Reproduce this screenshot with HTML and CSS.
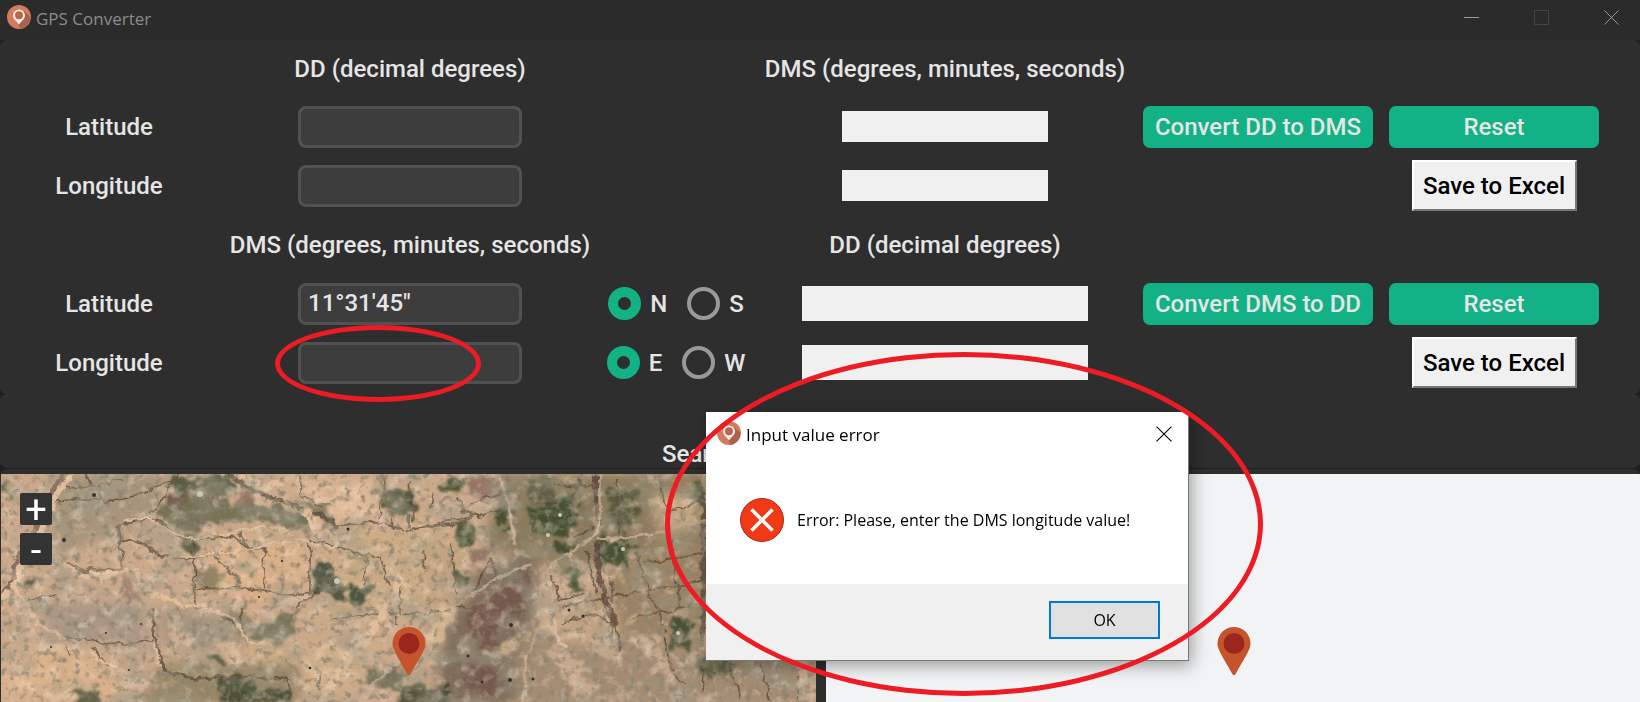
FILE: index.html
```html
<!DOCTYPE html>
<html lang="en">
<head>
<meta charset="utf-8">
<meta name="viewport" content="width=device-width, initial-scale=1">
<title>GPS Converter</title>
<link rel="stylesheet" href="styles.css">
</head>
<body class="app">
<svg class="defs" width="0" height="0" aria-hidden="true">
  <defs>
    <symbol id="logo" viewBox="0 0 24 24">
      <circle cx="12" cy="12" r="12" fill="#d27b5d"/>
      <path d="M17 6 L23.400 12 A12 12 0 0 1 13 24 L11.500 19 Z" fill="#a9624b"/>
      <path fill-rule="evenodd" d="M12 4.500a6 6 0 0 0-6 6c0 3.400 3.500 5.500 6 9 2.500-3.500 6-5.600 6-9a6 6 0 0 0-6-6z" fill="#f6ebe7"/>
      <circle cx="12" cy="10.300" r="4" fill="#b5684f"/>
    </symbol>
    <symbol id="pin" viewBox="0 0 34 48">
      <path d="M17 0A16.500 16.500 0 0 0 .5 16.500C.5 22 4 27 16 48h2C30 27 33.500 22 33.500 16.500A16.500 16.500 0 0 0 17 0z" fill="#c5542d"/>
      <circle cx="17" cy="16.500" r="10.500" fill="#9b261e"/>
    </symbol>
    <symbol id="cross" viewBox="0 0 15 15">
      <path d="M.5.5l14 14M14.500.5l-14 14" fill="none" stroke="currentColor" stroke-width="1"/>
    </symbol>
  </defs>
</svg>

<header class="titlebar">
  <svg class="logo" aria-hidden="true"><use href="#logo"/></svg>
  <h1 class="title">GPS Converter</h1>
  <div class="window-controls">
    <button class="win-button" type="button" aria-label="Minimize"><svg width="15" height="15" viewBox="0 0 15 15"><path d="M0 7.500h15" stroke="currentColor"/></svg></button>
    <button class="win-button win-button-off" type="button" aria-label="Maximize" disabled><svg width="15" height="15" viewBox="0 0 15 15"><path d="M.5.5h14v14H.5z" fill="none" stroke="currentColor"/></svg></button>
    <button class="win-button" type="button" aria-label="Close"><svg width="15" height="15"><use href="#cross"/></svg></button>
  </div>
</header>

<main class="content">
  <form class="panel converter">
    <h2 class="heading heading-in">DD (decimal degrees)</h2>
    <h2 class="heading heading-out">DMS (degrees, minutes, seconds)</h2>

    <label class="name" for="dd-lat">Latitude</label>
    <input class="entry" id="dd-lat" type="text">
    <output class="result result-short" for="dd-lat"></output>
    <button class="action action-wide" type="button">Convert DD to DMS</button>
    <button class="action action-reset" type="button">Reset</button>

    <label class="name" for="dd-lon">Longitude</label>
    <input class="entry" id="dd-lon" type="text">
    <output class="result result-short" for="dd-lon"></output>
    <button class="save" type="button">Save to Excel</button>

    <h2 class="heading heading-in">DMS (degrees, minutes, seconds)</h2>
    <h2 class="heading heading-out">DD (decimal degrees)</h2>

    <label class="name" for="dms-lat">Latitude</label>
    <input class="entry" id="dms-lat" type="text" value="11°31'45&quot;">
    <div class="radios" role="radiogroup" aria-label="Latitude hemisphere">
      <label class="radio"><input class="dot" type="radio" name="ns" checked>N</label>
      <label class="radio"><input class="dot" type="radio" name="ns">S</label>
    </div>
    <output class="result result-long" for="dms-lat"></output>
    <button class="action action-wide" type="button">Convert DMS to DD</button>
    <button class="action action-reset" type="button">Reset</button>

    <label class="name" for="dms-lon">Longitude</label>
    <input class="entry" id="dms-lon" type="text">
    <div class="radios" role="radiogroup" aria-label="Longitude hemisphere">
      <label class="radio"><input class="dot" type="radio" name="ew" checked>E</label>
      <label class="radio"><input class="dot" type="radio" name="ew">W</label>
    </div>
    <output class="result result-long" for="dms-lon"></output>
    <button class="save" type="button">Save to Excel</button>
  </form>

  <section class="panel search"><span class="search-label">Search</span></section>

  <section class="panel maps">
    <div class="map map-satellite">
      <svg class="imagery" viewBox="0 0 815 228" preserveAspectRatio="xMinYMin slice" aria-hidden="true">
        <defs>
          <filter id="rough" x="-5%" y="-5%" width="110%" height="110%">
            <feTurbulence type="fractalNoise" baseFrequency=".022" numOctaves="5" seed="4" result="n"/>
            <feDisplacementMap in="SourceGraphic" in2="n" scale="75" xChannelSelector="R" yChannelSelector="G"/>
            <feGaussianBlur stdDeviation="3"/>
          </filter>
          <filter id="wavy" x="-5%" y="-5%" width="110%" height="110%">
            <feTurbulence type="fractalNoise" baseFrequency=".03" numOctaves="4" seed="9" result="n"/>
            <feDisplacementMap in="SourceGraphic" in2="n" scale="26" xChannelSelector="R" yChannelSelector="G"/>
            <feGaussianBlur stdDeviation="1.300"/>
          </filter>
          <filter id="soft" x="-20%" y="-20%" width="140%" height="140%"><feGaussianBlur stdDeviation="18"/></filter>
          <filter id="mottle" x="0" y="0" width="100%" height="100%">
            <feTurbulence type="fractalNoise" baseFrequency=".027 .041" numOctaves="6" seed="12"/>
            <feColorMatrix values="0 0 0 0 .33  0 0 0 0 .31  0 0 0 0 .23  4 0 0 0 -1.900"/>
          </filter>
          <filter id="grain" x="0" y="0" width="100%" height="100%">
            <feTurbulence type="fractalNoise" baseFrequency=".137" numOctaves="4" seed="21"/>
            <feColorMatrix values="0 0 0 0 .24  0 0 0 0 .22  0 0 0 0 .16  0 3.500 0 0 -1.850"/>
            <feGaussianBlur stdDeviation=".3"/>
          </filter>
          <filter id="glint" x="0" y="0" width="100%" height="100%">
            <feTurbulence type="fractalNoise" baseFrequency=".083" numOctaves="5" seed="33"/>
            <feColorMatrix values="0 0 0 0 .95  0 0 0 0 .79  0 0 0 0 .65  0 0 3 0 -1.500"/>
          </filter>
        </defs>
        <rect width="815" height="228" fill="#cba98a"/>

        <g transform="translate(-1 -14) scale(.33333)" filter="url(#soft)">
          <path d="M170 40H540L440 190 160 290 150 130z" fill="#a9957c"/>
          <path d="M100 420L420 430 460 550 170 540z" fill="#ac9784"/>
          <path d="M470 440L720 470 740 560 490 560z" fill="#a8967f"/>
          <path d="M640 240H920V400L760 440 600 380z" fill="#dab089"/>
          <path d="M880 60H1130V170L960 200z" fill="#dfb896"/>
          <path d="M0 580L220 560 420 720H0z" fill="#dbb28c"/>
          <path d="M1000 200H1400V460L980 480z" fill="#cdab85"/>
          <path d="M740 560L1160 560 1000 700 760 640z" fill="#d3af8a"/>
          <path d="M480 610H900V740H420z" fill="#988768"/>
          <path d="M1420 340L1620 270 1580 740H1300L1330 520z" fill="#7f6c5a"/>
          <path d="M1500 40H2120V250L1700 330 1450 260z" fill="#8c7a5b"/>
          <path d="M1900 270L2120 240V560L1700 500z" fill="#9c8363"/>
          <path d="M1560 520L2440 560V740H1540z" fill="#a38c72"/>
          <path d="M1950 100L2100 90V200L1980 230zM1280 250h120v180h-130zM1700 440l150-20 10 120-160 20z" fill="#c3a380"/>
        </g>

        <g transform="translate(-1 -14) scale(.33333)" filter="url(#rough)">
          <g fill="#4a5338" opacity=".8">
            <path d="M530 55L690 42 700 95 620 110 590 95 545 110 510 80z" fill="#3f4b33"/>
            <path d="M500 110L620 100 730 130 850 140 920 170 930 220 880 210 800 180 640 190 580 220 520 200 480 160z" opacity=".8"/>
            <path d="M940 310L1010 330 1050 400 1000 415 935 390z" fill="#2b3f2b"/>
            <path d="M1050 375L1110 390 1105 435 1050 430z" fill="#2f432d"/>
            <path d="M1145 80L1230 90 1255 140 1200 160 1150 150z" fill="#39452e"/>
            <path d="M780 500L885 450 880 530 800 545 750 540z" opacity=".85"/>
            <path d="M50 385L125 330 110 380 60 400z"/>
            <path d="M665 655L720 650 750 680 800 690 860 680 880 730H680z" fill="#3c432b"/>
            <path d="M230 690L290 690 310 740H225z"/>
            <path d="M590 320h55l4 60-60-4z" opacity=".6"/>
            <path d="M630 575h40v35h-45z"/>
            <path d="M1100 640L1200 615 1230 650 1180 690 1110 680z" opacity=".8"/>
            <path d="M1200 670L1350 685 1360 745H1190z" fill="#343b27"/>
            <path d="M0 70h25v50H0z"/>
            <path d="M550 230l40 5 10 45-50-15z"/>
            <path d="M890 110l90 30 30 50-50-15z" opacity=".7"/>
            <path d="M680 440l60 30 50 40-60 10z" opacity=".45"/>
          </g>
          <g fill="#6d4c44" opacity=".55">
            <path d="M500 105L570 105 560 135 505 140z"/>
            <path d="M720 75L770 110 760 150 720 120z"/>
            <path d="M1400 60L1520 50 1480 110 1410 95z"/>
            <path d="M1430 270L1480 260 1460 310 1400 320z"/>
            <path d="M1410 440L1590 340 1540 520 1460 570 1400 520z"/>
            <path d="M1400 600L1520 620 1470 720 1410 690z"/>
            <path d="M370 340l50 50-10 50-40-20z" opacity=".7"/>
          </g>
          <g fill="#364529" opacity=".8">
            <path d="M1315 70L1390 50 1390 95 1320 100z"/>
            <path d="M1580 150L1700 110 1760 170 1700 230 1600 220z"/>
            <path d="M1370 190L1430 190 1420 250 1375 240z"/>
            <path d="M1480 145h50v40h-50z"/>
            <path d="M1650 245L1720 250 1700 290 1650 275z"/>
            <path d="M1800 220L1900 250 1890 320 1800 300z"/>
            <path d="M1820 80L1920 90 1900 200 1840 210z" opacity=".75"/>
            <path d="M1680 320L1730 330 1760 400 1700 370z"/>
            <path d="M2010 480L2080 480 2070 580 2020 560z"/>
            <path d="M1375 330l40 5-20 70-25-20z"/>
            <path d="M2090 590L2190 600 2180 640 2100 650z" opacity=".7"/>
            <path d="M2070 45l45 10-5 80-35-20z" opacity=".8"/>
            <path d="M1560 60l80-10 20 70-70 10z" opacity=".6"/>
          </g>
        </g>

        <g transform="translate(-1 -14) scale(.33333)" fill="none" filter="url(#wavy)">
          <g stroke="#4f4334" stroke-width="5" opacity=".7">
            <path d="M155 130L230 115 330 125 420 105 490 70 540 45"/>
            <path d="M200 85L290 75 370 60M260 45L275 80"/>
            <path d="M345 205L370 190 450 175 490 190 530 225 590 240 700 225 740 260 800 270" stroke-width="9"/>
            <path d="M350 205L365 240 430 250 480 285 560 295 690 275" stroke-width="8"/>
            <path d="M450 160L490 120 520 60M360 240L365 320"/>
            <path d="M580 220L585 450M720 220L750 270M790 270V390M640 290L700 340 720 370"/>
            <path d="M590 385H740L860 405 940 400M930 250V400"/>
            <path d="M690 50L780 100 900 145 1000 180 1010 210" stroke-width="13"/>
            <path d="M1000 200L1120 185 1220 210 1400 190M900 50V100L960 140M1150 50L1140 180M1180 170V210M1230 165V210"/>
            <path d="M930 240L1000 260 1140 290 1170 380M1100 290L1090 380"/>
            <path d="M170 310L250 330 360 330" stroke-width="14" opacity=".7"/>
            <path d="M455 440L465 540 490 630 570 655 690 655 760 650 860 660" stroke-width="9"/>
            <path d="M180 530L330 550 460 545M80 420L170 405M200 560L210 590M280 560L320 620"/>
            <path d="M660 470L720 500 750 545M880 440L960 395M720 440V490" stroke-width="8"/>
            <path d="M1000 480L1120 460 1260 460M1190 460V500M860 660L870 700M960 640V690M1200 350L1200 460"/>
          </g>
          <g stroke="#504234" stroke-width="6" opacity=".7">
            <path d="M1230 210L1400 175 1500 145M1230 60L1240 190M1300 100L1290 150M1370 110L1390 150 1420 170M1270 460L1400 440"/>
            <path d="M1350 250L1370 400M1270 270V330M1410 130L1530 90M1420 400L1470 300 1490 340"/>
            <path d="M1650 340L1680 420 1760 400M1690 440L1830 410 1940 390M1830 350L1840 430M1680 490L1780 460 1850 500"/>
            <path d="M1720 230L1800 190M1850 60L1860 220M1740 60L1690 170M1630 80L1800 70M2120 120L2000 160 1980 60"/>
            <path d="M1910 280L1950 400 2000 520M1930 310L2100 280M1950 390L2110 360M2010 240L2040 440M1830 430L1840 530M1960 460L2110 430M1890 480L1990 450"/>
            <path d="M1760 270L1790 400M1850 500L1860 570M1990 530L2010 630 2050 670M2110 600V700M2190 610L2220 720M2280 610L2310 720M2400 620L2390 720"/>
            <path d="M1790 250L1800 360 1820 430 1850 500" stroke="#513a33" stroke-width="18"/>
            <path d="M1785 50L1800 200" stroke="#513a33" stroke-width="20"/>
            <path d="M2110 100V560" stroke-width="16"/>
          </g>
          <g stroke="#e1bd9b" stroke-width="8">
            <path d="M205 40L145 120 110 220 60 310 30 390 0 420" stroke="#8a6f5c" stroke-width="30"/>
            <path d="M215 45L155 130 120 225 66 315 38 390 0 425" stroke-width="22"/>
            <path d="M140 305L190 315 240 345 360 335 400 330 440 400 500 415 560 440 620 440" stroke-width="14"/>
            <path d="M45 395L90 440 110 490 200 540" stroke-width="10"/>
            <path d="M370 180L450 175 520 220 590 240 740 205 830 200 900 240 1000 265 1080 190" stroke-width="7"/>
            <path d="M500 290L590 290 760 265 900 240" stroke-width="7"/>
            <path d="M910 145L940 190 960 230" stroke-width="28"/>
            <path d="M720 50L790 80 850 65M940 110L1140 160" stroke-width="20"/>
            <path d="M630 440L700 480 750 545 810 550"/>
            <path d="M1200 350L1170 430 1100 540 1040 600 980 690 960 730" stroke-width="22"/>
            <path d="M270 570L310 610 390 640M460 550L480 620"/>
          </g>
          <g stroke="#bea28a" stroke-width="9">
            <path d="M1500 50L1530 150 1545 260" stroke-width="9"/>
            <path d="M1040 740L1200 600 1300 490 1380 430 1500 350 1600 310"/>
            <path d="M1800 40L1800 180 1780 230 1660 310 1630 350 1620 480 1580 600 1570 720" stroke-width="10"/>
            <path d="M1790 240L1900 230 2020 205 2120 175" stroke-width="10"/>
            <path d="M1650 450L1680 550 1700 560" stroke="#d4b89c" stroke-width="10"/>
          </g>
        </g>
        <g transform="translate(-1 -14) scale(.33333)" filter="url(#rough)" opacity=".8">
          <path d="M1450 575L1500 560 1560 510 1540 570 1500 600zM1290 480L1360 430 1380 440 1340 520 1320 570 1270 560z" fill="#d9b893"/>
          <path d="M1630 560L1720 580 1790 690 1720 700zM1900 540L1970 530 2040 680 1980 640zM2380 540L2440 600V730L2400 670zM1760 530l80 0 30 60-60 10z" fill="#d0b092"/>
          <path d="M500 490l70 20 20 50-70-10zM640 540l70 10 0 60-50-10z" fill="#d8b491"/>
        </g>
        <rect width="815" height="228" filter="url(#mottle)" opacity=".5"/>
        <rect width="815" height="228" filter="url(#glint)" opacity=".4"/>
        <rect width="815" height="228" filter="url(#grain)" opacity=".8"/>
        <g fill="#c9c9b8"><circle cx="547" cy="61" r="2"/><circle cx="559" cy="41" r="2"/><circle cx="622" cy="75" r="2"/><circle cx="336" cy="107" r="3"/><circle cx="677" cy="159" r="2"/><circle cx="199" cy="20" r="3"/></g>
        <g fill="#37302a"><circle cx="63" cy="66" r="2"/><circle cx="93" cy="21" r="2"/><circle cx="347" cy="55" r="1.500"/><circle cx="50" cy="173" r="1"/><circle cx="309" cy="194" r="1.300"/><circle cx="510" cy="151" r="2"/><circle cx="467" cy="182" r="1.500"/><circle cx="509" cy="206" r="2"/><circle cx="481" cy="208" r="1.500"/><circle cx="532" cy="205" r="1.500"/><circle cx="582" cy="142" r="1.500"/><circle cx="568" cy="136" r="1.500"/><circle cx="105" cy="159" r="1"/><circle cx="140" cy="150" r="1"/><circle cx="128" cy="196" r="1"/><circle cx="258" cy="123" r="1"/><circle cx="281" cy="87" r="1"/></g>
      </svg>
      <div class="zoom">
        <button class="zoom-button" type="button" aria-label="Zoom in">+</button>
        <button class="zoom-button" type="button" aria-label="Zoom out">-</button>
      </div>
      <svg class="pin" role="img" aria-label="Marker"><use href="#pin"/></svg>
    </div>
    <div class="map">
      <svg class="pin" role="img" aria-label="Marker"><use href="#pin"/></svg>
    </div>
  </section>
</main>

<div class="dialog" role="alertdialog" aria-labelledby="dialog-title" aria-describedby="dialog-text">
  <div class="dialog-bar">
    <svg class="logo" aria-hidden="true"><use href="#logo"/></svg>
    <h2 class="dialog-title" id="dialog-title">Input value error</h2>
    <button class="dialog-close" type="button" aria-label="Close"><svg width="16" height="16"><use href="#cross"/></svg></button>
  </div>
  <div class="dialog-body">
    <svg class="error-icon" viewBox="0 0 44 44" aria-hidden="true">
      <circle cx="22" cy="22" r="21.500" fill="#f03a17" stroke="#a8281a"/>
      <path d="M11.500 11.500l21 21M32.500 11.500l-21 21" stroke="#fff" stroke-width="3.600"/>
    </svg>
    <p class="dialog-text" id="dialog-text">Error: Please, enter the DMS longitude value!</p>
  </div>
  <div class="dialog-footer"><button class="ok" type="button">OK</button></div>
</div>

<div class="ring ring-small"></div>
<div class="ring ring-large"></div>
</body>
</html>
```
FILE: styles.css
```css
* { box-sizing: border-box; }

.app {
  position: relative;
  display: flex;
  flex-direction: column;
  min-height: 100vh;
  margin: 0;
  overflow-x: hidden;
  background: #202020;
  color: #e5e5e5;
  font: 500 24px/28px Roboto, "Liberation Sans", sans-serif;
}

button, input { font: inherit; }

.defs { position: absolute; }

.titlebar {
  display: flex;
  height: 40px;
  padding-left: 7px;
  background: #2b2b2b;
  color: #8c8c8c;
}

.logo {
  width: 24px;
  height: 24px;
  margin-top: 5px;
}

.title {
  margin: 0 0 0 5px;
  font: 400 17px/38px "Open Sans", "Noto Sans", sans-serif;
}

.window-controls {
  display: flex;
  margin-left: auto;
  height: 35px;
}

.win-button {
  display: flex;
  align-items: center;
  justify-content: center;
  width: 70px;
  padding: 0 0 0 13px;
  border: 0;
  background: none;
  color: #999;
}

.win-button-off { color: #444; }

.content {
  flex: 1;
  display: flex;
  flex-direction: column;
}

.panel {
  border-radius: 7px;
  background: #2e2e2e;
}

.converter {
  display: grid;
  grid-template-columns: 218fr 384fr 148fr 390fr 236fr 236fr;
  grid-template-rows: 57px;
  grid-auto-rows: 59px;
  align-items: center;
  justify-items: center;
  padding: 0 28px 2px 0;
}

.heading {
  margin: 0;
  font: inherit;
  white-space: nowrap;
}

.heading-in, .entry { grid-column: 2; }
.heading-out, .result { grid-column: 4; }
.name { grid-column: 1; }
.radios { grid-column: 3; }
.action-wide { grid-column: 5; }
.action-reset, .save { grid-column: 6; }

.entry {
  width: 224px;
  height: 42px;
  padding: 0 7px 2px;
  border: 3px solid #515151;
  border-radius: 8px;
  background: #3d3d3d;
  color: #e5e5e5;
}

.result { background: #f0f0f0; }

.result-short {
  width: 206px;
  height: 31px;
}

.result-long {
  width: 286px;
  height: 35px;
}

.action {
  height: 42px;
  padding: 0;
  border: 0;
  border-radius: 7px;
  background: #12b286;
  color: #e5e5e5;
}

.action-wide { width: 230px; }
.action-reset { width: 210px; }

.save {
  width: 165px;
  height: 51px;
  padding: 0;
  border: 2px solid;
  border-color: #fff #777 #777 #fff;
  background: #f0f0f0;
  color: #000;
  white-space: nowrap;
}

.radios {
  display: flex;
  gap: 20px;
}

.radio {
  display: flex;
  align-items: center;
  gap: 9px;
}

.dot {
  appearance: none;
  width: 33px;
  height: 33px;
  margin: 0;
  border: 4px solid #999;
  border-radius: 50%;
}

.dot:checked { border: 10px solid #12b286; }

.search {
  display: flex;
  justify-content: center;
  align-items: flex-end;
  height: 74px;
}

.search-label {
  width: 316px;
  background: #2e2e2e;
  line-height: 28px;
}

.maps {
  flex: 1;
  display: grid;
  grid-template-columns: 1fr 1fr;
  gap: 10px;
  min-height: 233px;
  margin-top: 1px;
  padding: 5px 0 0 1px;
  border-radius: 7px 7px 0 0;
}

.map {
  position: relative;
  overflow: hidden;
  background: #f1f3f5;
}

.map-satellite { background: #c8a988; }

.imagery {
  position: absolute;
  width: 100%;
  height: 100%;
}

.zoom {
  position: absolute;
  top: 19px;
  left: 19px;
  display: grid;
  gap: 8px;
}

.zoom-button {
  width: 32px;
  height: 32px;
  padding: 0;
  border: 0;
  border-radius: 2px;
  background: #333;
  color: #fff;
  font: 400 38px/34px Roboto, sans-serif;
}

.pin {
  position: absolute;
  top: 153px;
  left: calc(50% - 16px);
  width: 34px;
  height: 48px;
}

.dialog {
  position: absolute;
  top: 412px;
  left: calc(50% - 114px);
  width: 483px;
  border-right: 1px solid #777;
  border-bottom: 1px solid #777;
  background: #fff;
  box-shadow: 3px 5px 16px rgba(0, 0, 0, .35);
  color: #000;
  font: 400 16px/24px "Open Sans", "Noto Sans", sans-serif;
}

.dialog-bar {
  display: flex;
  height: 44px;
  padding: 4px 16px 0 11px;
}

.dialog-title {
  margin: 0 0 0 5px;
  font: inherit;
  font-size: 17px;
  line-height: 38px;
}

.dialog-close {
  display: flex;
  align-items: center;
  height: 36px;
  margin-left: auto;
  padding: 0;
  border: 0;
  background: none;
  color: #000;
}

.dialog-body {
  display: flex;
  align-items: center;
  gap: 13px;
  height: 128px;
  padding: 0 0 0 34px;
}

.error-icon {
  flex: none;
  width: 44px;
  height: 44px;
}

.dialog-text {
  margin: 0;
  white-space: nowrap;
}

.dialog-footer {
  display: flex;
  justify-content: flex-end;
  padding: 17px 28px 21px;
  background: #f0f0f0;
}

.ok {
  width: 111px;
  height: 38px;
  padding: 0;
  border: 2px solid #0078d7;
  background: #e1e1e1;
  color: #000;
}

.ring {
  position: absolute;
  border: 5px solid #ed1c24;
  border-radius: 50%;
  pointer-events: none;
}

.ring-small {
  top: 325px;
  left: calc(50% - 545px);
  width: 206px;
  height: 77px;
}

.ring-large {
  top: 352px;
  left: calc(50% - 155px);
  width: 598px;
  height: 344px;
}
```
